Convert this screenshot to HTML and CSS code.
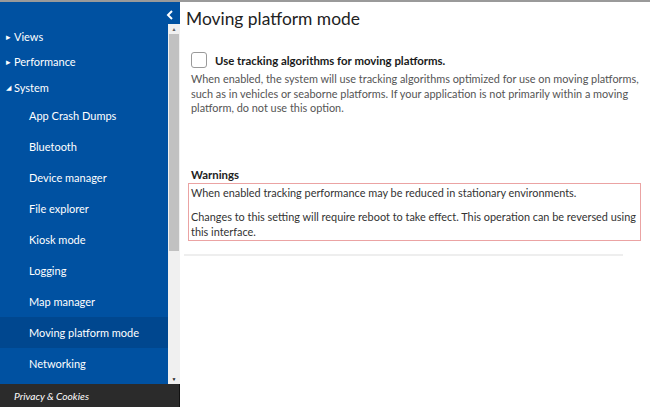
FILE: index.html
```html
<!DOCTYPE html>
<html>
<head>
<meta charset="utf-8">
<link rel="stylesheet" href="styles.css">
</head>
<body>
<div class="app">
  <aside class="sidebar">
    <div class="side-head">
      <svg class="collapse" width="8" height="10" viewBox="0 0 8 10"><path d="M6 1 L2 5 L6 9" fill="none" stroke="#fff" stroke-width="2"/></svg>
    </div>
    <div class="side-body">
      <nav class="nav">
        <div class="top-item"><span class="tri">&#9656;</span>Views</div>
        <div class="top-item"><span class="tri">&#9656;</span>Performance</div>
        <div class="top-item sys"><span class="tri open">&#9698;</span>System</div>
        <div class="sub-item">App Crash Dumps</div>
        <div class="sub-item">Bluetooth</div>
        <div class="sub-item">Device manager</div>
        <div class="sub-item">File explorer</div>
        <div class="sub-item">Kiosk mode</div>
        <div class="sub-item">Logging</div>
        <div class="sub-item">Map manager</div>
        <div class="sub-item active">Moving platform mode</div>
        <div class="sub-item">Networking</div>
      </nav>
      <div class="scrollbar">
        <div class="sb-arrow">&#9650;</div>
        <div class="sb-track"><div class="sb-thumb"></div></div>
        <div class="sb-arrow">&#9660;</div>
      </div>
    </div>
    <div class="side-foot">Privacy &amp; Cookies</div>
  </aside>
  <main class="main">
    <h1 class="title">Moving platform mode</h1>
    <div class="content">
      <label class="check-row"><span class="checkbox"></span><span class="check-label">Use tracking algorithms for moving platforms.</span></label>
      <p class="desc">When enabled, the system will use tracking algorithms optimized for use on moving platforms, such as in vehicles or seaborne platforms. If your application is not primarily within a moving platform, do not use this option.</p>
      <h2 class="warn-title">Warnings</h2>
      <div class="warn-box">
        <p>When enabled tracking performance may be reduced in stationary environments.</p>
        <p>Changes to this setting will require reboot to take effect. This operation can be reversed using this interface.</p>
      </div>
    </div>
    <div class="separator"></div>
  </main>
</div>
</body>
</html>
```
FILE: styles.css
```css
html, body {
  margin: 0;
  padding: 0;
}
body {
  font-family: "Lato", "Liberation Sans", sans-serif;
  background: #fff;
  width: 650px;
  height: 407px;
  overflow: hidden;
  border-top: 2px solid #9a9a9a;
  box-sizing: border-box;
}
.app {
  display: flex;
  height: 405px;
}
.sidebar {
  width: 180px;
  flex: none;
  display: flex;
  flex-direction: column;
  background: #0051a1;
}
.side-head {
  height: 22px;
  display: flex;
  justify-content: flex-end;
  align-items: flex-start;
  padding-right: 6px;
  padding-top: 8px;
  box-sizing: border-box;
}
.side-body {
  height: 360px;
  display: flex;
}
.nav {
  flex: 1;
  color: #fff;
  font-size: 11px;
  overflow: hidden;
}
.top-item {
  height: 25px;
  display: flex;
  align-items: center;
  padding-left: 6px;
}
.top-item.sys {
  height: 26px;
}
.tri {
  font-size: 9px;
  width: 8px;
  display: inline-block;
}
.tri.open {
  font-size: 7px;
}
.sub-item {
  height: 31px;
  display: flex;
  align-items: center;
  padding-left: 29px;
}
.sub-item.active {
  background: #00478f;
}
.scrollbar {
  width: 12px;
  background: #f0f0f0;
  display: flex;
  flex-direction: column;
}
.sb-arrow {
  height: 10px;
  font-size: 5px;
  color: #606060;
  text-align: center;
  line-height: 10px;
}
.sb-arrow:last-child {
  color: #202020;
}
.sb-track {
  flex: 1;
  padding: 0 1px;
}
.sb-thumb {
  height: 217px;
  background: #c1c1c1;
}
.side-foot {
  height: 23px;
  background: #2b2b2b;
  color: #fff;
  font-style: italic;
  font-size: 10.2px;
  display: flex;
  align-items: center;
  padding-left: 14px;
  border-right: 1px solid #111;
}
.main {
  flex: 1;
  padding-left: 4px;
}
.title {
  margin: 4px 0 0 2px;
  font-size: 17.4px;
  font-weight: 400;
  color: #222;
  line-height: 26px;
}
.content {
  padding-left: 4px;
  width: 453px;
}
.check-row {
  display: flex;
  align-items: center;
  margin-top: 20px;
  margin-left: 3px;
}
.checkbox {
  width: 14px;
  height: 14px;
  border: 1px solid #9a9a9a;
  border-radius: 3px;
  flex: none;
}
.check-label {
  margin-left: 8px;
  font-weight: 700;
  font-size: 11.4px;
  color: #1a1a1a;
}
.desc {
  margin: 4px 0 0 3px;
  font-size: 10.9px;
  line-height: 14.5px;
  color: #555;
}
.warn-title {
  margin: 51px 0 0 3px;
  font-size: 11.4px;
  font-weight: 700;
  color: #222;
  line-height: 16px;
}
.warn-box {
  border: 1px solid #eba3a3;
  padding: 2px 2px 1px 2px;
  margin-top: 0;
  font-size: 10.9px;
  line-height: 14.5px;
  color: #333;
}
.warn-box p {
  margin: 0;
}
.warn-box p + p {
  margin-top: 10px;
}
.separator {
  width: 439px;
  height: 2px;
  background: #eeeeee;
  margin-top: 13px;
}
```
